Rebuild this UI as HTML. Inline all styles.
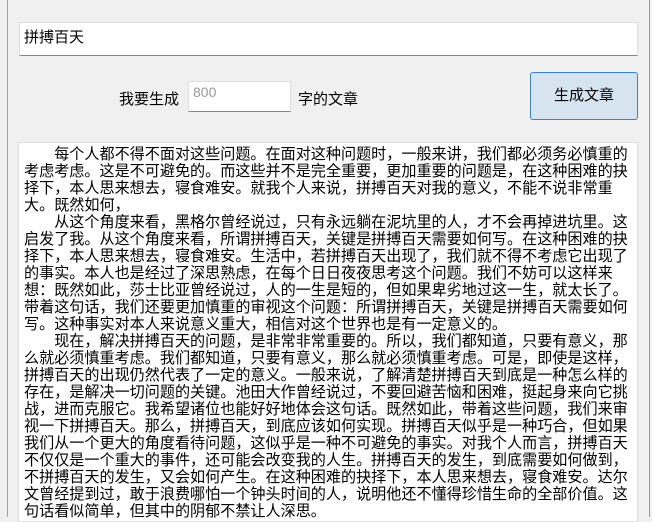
<!DOCTYPE html>
<html><head><meta charset="utf-8"><style>
body{margin:0;width:652px;height:517px;background:#f0f0f0;position:relative;overflow:hidden;font-family:"Liberation Sans","Noto Sans CJK SC","WenQuanYi Zen Hei",sans-serif;}
.vl{position:absolute;top:0;bottom:0;width:1px;background:#a0a0a0}
#title{position:absolute;left:19px;top:22px;width:619px;height:34px;background:#fff;border:1px solid #ddd;border-bottom:1px solid #888;box-sizing:border-box;font-size:15px;padding:3px 4px;color:#000}
.lbl{position:absolute;top:88px;font-size:15px;color:#000}
#num{position:absolute;left:188px;top:81px;width:103px;height:31px;background:#fff;border:1px solid #ddd;border-bottom:1px solid #888;box-sizing:border-box;font-size:14px;color:#999;padding:2px 4px}
#btn{position:absolute;left:530px;top:72px;width:108px;height:48px;background:#d6e4f0;border:1px solid #3c7fd0;border-radius:3px;box-sizing:border-box;font-size:15px;text-align:center;line-height:46px;color:#000}
#ta{position:absolute;left:18px;top:142px;width:620px;height:380px;background:#fff;border:1px solid #ddd;box-sizing:border-box;padding:3px 0 0 5px;font-size:15.1px;color:#000;white-space:nowrap;overflow:hidden}
#ta div{height:17px;line-height:17px}
</style></head><body>
<div class="vl" style="left:7px"></div><div class="vl" style="left:649px"></div>
<div id="title">拼搏百天</div>
<div class="lbl" style="left:119px">我要生成</div>
<div id="num">800</div>
<div class="lbl" style="left:298px">字的文章</div>
<div id="btn">生成文章</div>
<div id="ta">
<div>　　每个人都不得不面对这些问题。在面对这种问题时，一般来讲，我们都必须务必慎重的</div>
<div>考虑考虑。这是不可避免的。而这些并不是完全重要，更加重要的问题是，在这种困难的抉</div>
<div>择下，本人思来想去，寝食难安。就我个人来说，拼搏百天对我的意义，不能不说非常重</div>
<div>大。既然如何，</div>
<div>　　从这个角度来看，黑格尔曾经说过，只有永远躺在泥坑里的人，才不会再掉进坑里。这</div>
<div>启发了我。从这个角度来看，所谓拼搏百天，关键是拼搏百天需要如何写。在这种困难的抉</div>
<div>择下，本人思来想去，寝食难安。生活中，若拼搏百天出现了，我们就不得不考虑它出现了</div>
<div>的事实。本人也是经过了深思熟虑，在每个日日夜夜思考这个问题。我们不妨可以这样来</div>
<div>想：既然如此，莎士比亚曾经说过，人的一生是短的，但如果卑劣地过这一生，就太长了。</div>
<div>带着这句话，我们还要更加慎重的审视这个问题：所谓拼搏百天，关键是拼搏百天需要如何</div>
<div>写。这种事实对本人来说意义重大，相信对这个世界也是有一定意义的。</div>
<div>　　现在，解决拼搏百天的问题，是非常非常重要的。所以，我们都知道，只要有意义，那</div>
<div>么就必须慎重考虑。我们都知道，只要有意义，那么就必须慎重考虑。可是，即使是这样，</div>
<div>拼搏百天的出现仍然代表了一定的意义。一般来说，了解清楚拼搏百天到底是一种怎么样的</div>
<div>存在，是解决一切问题的关键。池田大作曾经说过，不要回避苦恼和困难，挺起身来向它挑</div>
<div>战，进而克服它。我希望诸位也能好好地体会这句话。既然如此，带着这些问题，我们来审</div>
<div>视一下拼搏百天。那么，拼搏百天，到底应该如何实现。拼搏百天似乎是一种巧合，但如果</div>
<div>我们从一个更大的角度看待问题，这似乎是一种不可避免的事实。对我个人而言，拼搏百天</div>
<div>不仅仅是一个重大的事件，还可能会改变我的人生。拼搏百天的发生，到底需要如何做到，</div>
<div>不拼搏百天的发生，又会如何产生。在这种困难的抉择下，本人思来想去，寝食难安。达尔</div>
<div>文曾经提到过，敢于浪费哪怕一个钟头时间的人，说明他还不懂得珍惜生命的全部价值。这</div>
<div>句话看似简单，但其中的阴郁不禁让人深思。</div>
</div>
</body></html>
